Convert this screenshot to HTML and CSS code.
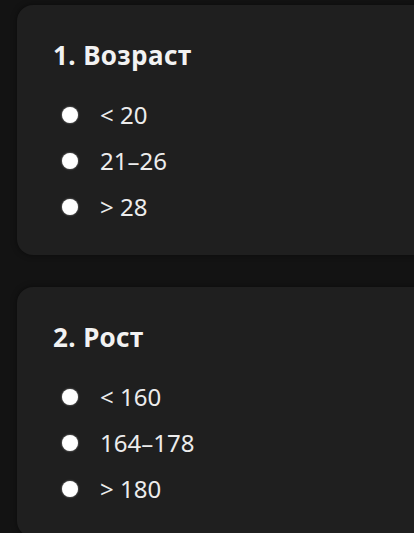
FILE: index.html
```html
<!DOCTYPE html>
<html lang="ru">
<head>
<meta charset="utf-8">
<link rel="stylesheet" href="styles.css">
</head>
<body>
<main class="page">
  <section class="card">
    <h2 class="question">1. Возраст</h2>
    <ul class="options">
      <li class="option"><span class="dot"></span><span class="label">&lt; 20</span></li>
      <li class="option"><span class="dot"></span><span class="label">21–26</span></li>
      <li class="option"><span class="dot"></span><span class="label">&gt; 28</span></li>
    </ul>
  </section>
  <section class="card">
    <h2 class="question">2. Рост</h2>
    <ul class="options">
      <li class="option"><span class="dot"></span><span class="label">&lt; 160</span></li>
      <li class="option"><span class="dot"></span><span class="label">164–178</span></li>
      <li class="option"><span class="dot"></span><span class="label">&gt; 180</span></li>
    </ul>
  </section>
</main>
</body>
</html>
```
FILE: styles.css
```css
html, body {
  margin: 0;
  padding: 0;
  background: #131313;
  overflow: hidden;
}
body {
  font-family: "Noto Sans", "Open Sans", sans-serif;
  color: #ececec;
}
.page {
  display: flex;
  flex-direction: column;
  gap: 32px;
  padding: 5px 0 0 17px;
}
.card {
  background: #1f1f1f;
  border-radius: 16px;
  margin-right: -40px;
  padding: 35px 36px 25px 36px;
  box-shadow: 0 0 6px rgba(0, 0, 0, 0.45);
}
.question {
  margin: 0;
  font-size: 26px;
  line-height: 30px;
  font-weight: 700;
  color: #f2f2f2;
  letter-spacing: 0.4px;
}
.options {
  list-style: none;
  margin: 22px 0 0 0;
  padding: 0 0 0 9px;
  display: flex;
  flex-direction: column;
}
.option {
  height: 46px;
  display: flex;
  align-items: center;
  gap: 22px;
}
.dot {
  width: 16px;
  height: 16px;
  border-radius: 50%;
  background: #ffffff;
  box-shadow: 0 0 2px rgba(255, 255, 255, 0.6);
  flex: none;
}
.label {
  font-size: 24px;
  line-height: 30px;
  color: #ececec;
}
```
